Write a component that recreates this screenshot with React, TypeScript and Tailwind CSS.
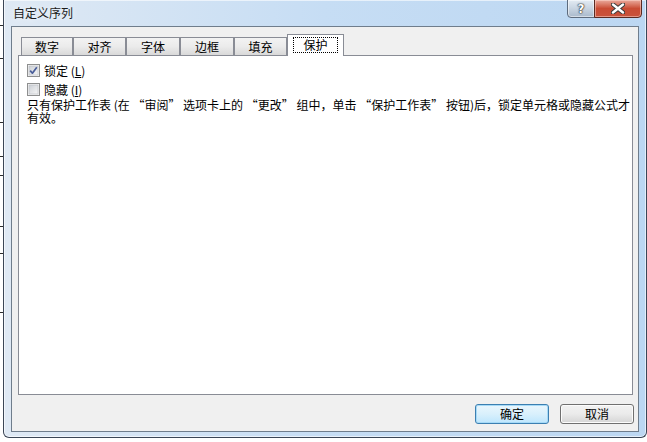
import React from "react";

const font = "font-['Noto_Sans_CJK_SC','Liberation_Sans',sans-serif]";

function CheckBox({ checked }: { checked: boolean }) {
  return (
    <svg width="13" height="13" viewBox="0 0 13 13" className="shrink-0">
      <defs>
        <linearGradient id={checked ? "cbg1" : "cbg2"} x1="0" y1="0" x2="1" y2="1">
          <stop offset="0" stopColor="#cbcfd5" />
          <stop offset="1" stopColor="#f7f7f7" />
        </linearGradient>
      </defs>
      <rect x="0.5" y="0.5" width="12" height="12" fill="#f4f4f4" stroke="#8e8f8f" />
      <rect x="2" y="2" width="9" height="9" fill={`url(#${checked ? "cbg1" : "cbg2"})`} stroke="#b9bcc2" strokeWidth="0.6" />
      {checked && (
        <path d="M3.2 6.6 L5.4 9.2 L9.8 3.2" fill="none" stroke="#4a5e9a" strokeWidth="1.7" strokeLinejoin="round" />
      )}
    </svg>
  );
}

function Tab({ label, w, selected }: { label: string; w: string; selected?: boolean }) {
  if (selected) {
    return (
      <div className={`${w} relative z-10 -mb-px flex h-[22px] items-start justify-center border-x border-t border-[#898c95] bg-white pt-[2px]`}>
        <div className="flex h-[16px] w-[45px] items-center justify-center border border-dotted border-black text-[12px] leading-none text-black">
          {label}
        </div>
      </div>
    );
  }
  return (
    <div
      className={`${w} flex h-[18px] items-center justify-center border-x border-t border-[#898c95] bg-gradient-to-b from-[#f3f3f3] via-[#ebebeb] to-[#d9d9d9] text-[12px] leading-none text-black`}
    >
      {label}
    </div>
  );
}

export default function App() {
  const lines = [25, 58, 122, 156, 175, 226, 253, 312];
  return (
    <div className={`relative h-[442px] w-[647px] overflow-hidden bg-white ${font}`}>
      {lines.map((y) => (
        <div key={y} className="absolute left-0 h-px w-[3px] bg-[#2b2b2b]" style={{ top: y }} />
      ))}
      <div className="ml-[3px] flex h-[438px] w-[644px] flex-col rounded-b-[6px] border-x border-b border-[#3b4656] bg-gradient-to-r from-[#dfe9f4] via-[#c6ddf4] to-[#bcd7f2] shadow-[inset_0_0_0_1px_rgba(255,255,255,0.6)]">
        {/* title bar */}
        <div className="flex h-[26px] shrink-0 items-start justify-between pl-[9px] pr-[4px]">
          <div className="pt-[6px] text-[12px] leading-[14px] text-[#1b1b1b] [text-shadow:0_0_6px_rgba(255,255,255,0.9)]">
            自定义序列
          </div>
          <div className="flex">
            <div className="-mt-px flex h-[19px] w-[28px] items-center justify-center rounded-bl-[4px] border border-[#5d6b7d] bg-gradient-to-b from-[#e3ebf3] via-[#c8d4e1] to-[#a9b9cb] shadow-[inset_0_0_0_1px_rgba(255,255,255,0.5)]">
              <span className="font-['DejaVu_Sans',sans-serif] text-[12px] font-bold leading-none text-white [text-shadow:0_0_1px_#2a2a2a,0_0_1px_#2a2a2a,0_0_2px_#2a2a2a]">
                ?
              </span>
            </div>
            <div className="-mt-px -ml-px flex h-[19px] w-[48px] items-center justify-center rounded-br-[4px] border border-[#5a2a22] bg-gradient-to-b from-[#e9a99c] via-[#c94b33] to-[#c9533c] shadow-[inset_0_0_0_1px_rgba(255,220,210,0.5)]">
              <svg width="14" height="11" viewBox="0 0 14 11">
                <path d="M2 1.5 L12 9.5 M12 1.5 L2 9.5" stroke="#3a3a3a" strokeWidth="4.4" strokeLinecap="round" />
                <path d="M2 1.5 L12 9.5 M12 1.5 L2 9.5" stroke="#ffffff" strokeWidth="2.4" strokeLinecap="round" />
              </svg>
            </div>
          </div>
        </div>
        {/* client */}
        <div className="mx-[7px] mb-[5px] flex flex-1 flex-col border border-[#6f7d8c] bg-[#f0f0f0] pt-[7px]">
          <div className="flex h-[21px] items-end pl-[9px]">
            <Tab label="数字" w="w-[52px]" />
            <Tab label="对齐" w="w-[53px]" />
            <Tab label="字体" w="w-[54px]" />
            <Tab label="边框" w="w-[54px]" />
            <Tab label="填充" w="w-[53px]" />
            <Tab label="保护" w="w-[57px]" selected />
          </div>
          <div className="ml-[6px] mr-[5px] flex h-[340px] flex-col border border-[#898c95] bg-white pl-[8px] pt-[8px] text-[12px] text-black">
            <div className="flex h-[19px] items-start gap-[4px]">
              <CheckBox checked />
              <span className="text-[12px] leading-[13px]">
                锁定 (<span className="underline">L</span>)
              </span>
            </div>
            <div className="flex h-[14px] items-start gap-[4px]">
              <CheckBox checked={false} />
              <span className="text-[12px] leading-[13px]">
                隐藏 (<span className="underline">I</span>)
              </span>
            </div>
            <p className="mt-[1px] whitespace-nowrap text-[12px] leading-[13px]">
              只有保护工作表 (在 “审阅” 选项卡上的 “更改” 组中，单击 “保护工作表” 按钮)后，锁定单元格或隐藏公式才
              <br />
              有效。
            </p>
          </div>
          <div className="mt-[9px] flex justify-end gap-[11px] pr-[4px]">
            <button className="flex h-[20px] w-[74px] items-center justify-center rounded-[3px] border border-[#3c7fb1] bg-gradient-to-b from-[#eaf6fd] via-[#d9f0fc] to-[#bee6fd] text-[12px] leading-none text-black shadow-[inset_0_0_0_1px_#a6daf7]">
              确定
            </button>
            <button className="flex h-[20px] w-[74px] items-center justify-center rounded-[3px] border border-[#707070] bg-gradient-to-b from-[#f2f2f2] via-[#ebebeb] to-[#d5d5d5] text-[12px] leading-none text-black shadow-[inset_0_0_0_1px_#fcfcfc]">
              取消
            </button>
          </div>
        </div>
      </div>
    </div>
  );
}
